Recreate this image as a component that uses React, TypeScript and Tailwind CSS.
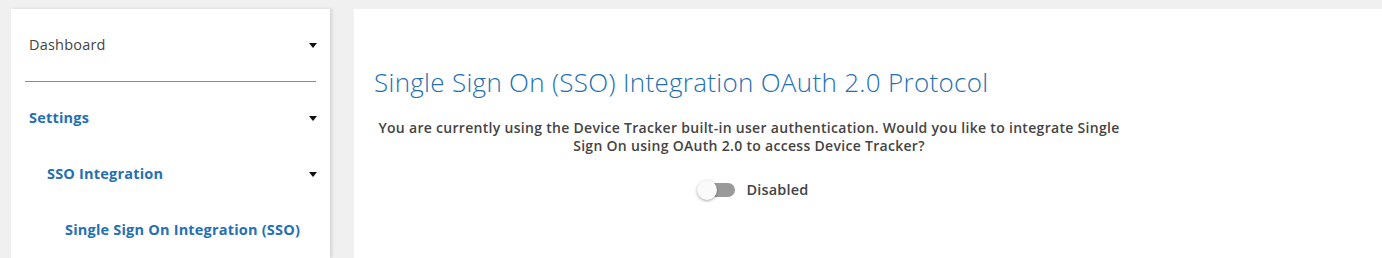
import React, { useState } from "react";

const font = { fontFamily: '"Open Sans", "Liberation Sans", sans-serif' };

const Caret = () => (
  <svg width="8" height="5" viewBox="0 0 8 5" className="shrink-0">
    <path d="M0 0 H8 L4 5 Z" fill="#111" />
  </svg>
);

const NavRow: React.FC<{ label: string; indent: string; active?: boolean; caret?: boolean }> = ({
  label,
  indent,
  active,
  caret = true,
}) => (
  <div className={`flex h-[56px] items-center justify-between pr-[13px] ${indent}`}>
    <span
      className={
        active
          ? "text-[14.5px] font-bold tracking-[0.2px] text-[#2470b3]"
          : "text-[14.5px] tracking-[0.2px] text-[#444]"
      }
    >
      {label}
    </span>
    {caret && <Caret />}
  </div>
);

export default function App() {
  const [enabled, setEnabled] = useState(false);

  return (
    <div className="flex h-[258px] gap-[24px] overflow-hidden bg-[#f0f0f0] pl-[11px] pt-[9px]" style={font}>
      {/* Sidebar */}
      <aside className="w-[319px] shrink-0 bg-white pt-[8px] shadow-[2px_0_3px_rgba(0,0,0,0.12)]">
        <NavRow label="Dashboard" indent="pl-[18px]" />
        <div className="mx-[14px] mt-[8px] h-px bg-[#8a8a8a]" />
        <div className="pt-[8px]">
          <NavRow label="Settings" indent="pl-[18px]" active />
          <NavRow label="SSO Integration" indent="pl-[36px]" active />
          <NavRow label="Single Sign On Integration (SSO)" indent="pl-[54px]" active caret={false} />
        </div>
      </aside>

      {/* Main */}
      <main className="flex-1 bg-white pl-[20px] pt-[56px]">
        <div className="w-[750px]">
          <h1 className="text-[26px] font-light leading-[34px] tracking-[0.3px] text-[#2470b3]">
            Single Sign On (SSO) Integration OAuth 2.0 Protocol
          </h1>
          <p className="mt-[20px] text-center text-[14px] font-semibold leading-[17.5px] tracking-[0.3px] text-[#444]">
            You are currently using the Device Tracker built-in user authentication. Would you like to integrate Single
            Sign On using OAuth 2.0 to access Device Tracker?
          </p>
          <div className="mt-[25px] flex items-center justify-center gap-[11px] pl-[8px]">
            <button
              type="button"
              onClick={() => setEnabled(!enabled)}
              className="relative h-[20px] w-[38px]"
            >
              <span
                className={`absolute left-[6px] top-[3px] h-[14px] w-[32px] rounded-full ${
                  enabled ? "bg-[#8ab6dc]" : "bg-[#9a9a9a]"
                }`}
              />
              <span
                className={`absolute top-0 h-[20px] w-[20px] rounded-full shadow-[0_1px_3px_rgba(0,0,0,0.35)] ${
                  enabled ? "left-[18px] bg-[#2470b3]" : "left-0 bg-[#fafafa]"
                }`}
              />
            </button>
            <span className="text-[14.5px] font-semibold tracking-[0.2px] text-[#444]">
              {enabled ? "Enabled" : "Disabled"}
            </span>
          </div>
        </div>
      </main>
    </div>
  );
}
